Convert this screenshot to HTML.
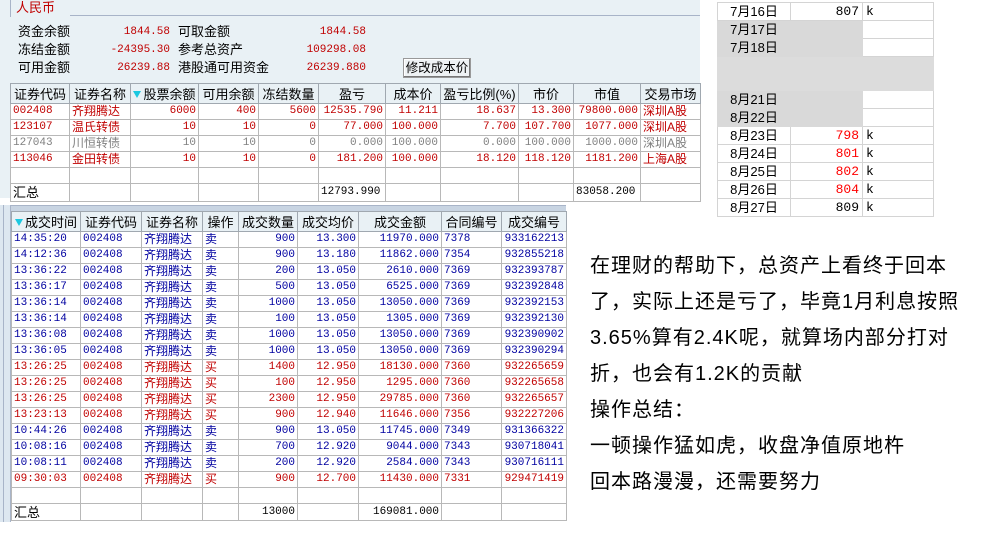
<!DOCTYPE html>
<html><head><meta charset="utf-8"><style>
*{margin:0;padding:0;box-sizing:border-box}
body{width:991px;height:555px;background:#fff;position:relative;overflow:hidden;font-family:"Liberation Sans","Noto Sans CJK SC",sans-serif;font-size:12px;color:#000}
.abs{position:absolute}
table{border-collapse:collapse;table-layout:fixed;position:absolute}
td{height:16px;line-height:15px;border:1px solid #b8b8b8;padding:0 2px;white-space:nowrap;overflow:hidden}
th{font-weight:normal;background:#e9f1f5;border:1px solid #a0a8b0;height:20px;padding:0 2px;font-size:13px;white-space:nowrap;overflow:hidden}
.r{text-align:right}.c{text-align:center}
.red td{color:#c00000}.gry td{color:#808080}.blu td{color:#0000a0}
.n{font-family:"Liberation Mono",monospace;font-size:11px}
.tri{display:inline-block;width:0;height:0;border-left:4px solid transparent;border-right:4px solid transparent;border-top:7px solid #1cc8e0;margin-right:2px;vertical-align:1px}
#right td{height:18px;border:1px solid #d4d4d4;font-size:13px;padding:0 3px;line-height:17px}
.g{background:#d9d9d9}
.txt{font-size:20px;line-height:36px;letter-spacing:1px;white-space:nowrap}
</style></head><body>
<div class="abs" style="left:0;top:0;width:700px;height:198px;background:#e9f1f5"></div>
<div class="abs" style="left:10px;top:0;width:690px;height:16px;border-bottom:1px solid #a8b4c8"></div>
<div class="abs" style="left:10px;top:0;width:60px;height:17px;background:#e9f1f5;border-left:1px solid #a8b4c8;color:#c00000;font-size:13px;padding-left:5px;line-height:15px">人民币</div>
<div class="abs" style="left:18px;top:23px;font-size:13px;line-height:18px">资金余额<br>冻结金额<br>可用金额</div>
<div class="abs n r" style="left:90px;top:23px;width:80px;color:#c00000;line-height:18px">1844.58<br>-24395.30<br>26239.88</div>
<div class="abs" style="left:178px;top:23px;font-size:13px;line-height:18px">可取金额<br>参考总资产<br>港股通可用资金</div>
<div class="abs n r" style="left:286px;top:23px;width:80px;color:#c00000;line-height:18px">1844.58<br>109298.08<br>26239.880</div>
<div class="abs" style="left:403px;top:58px;width:68px;height:20px;background:#eef2f4;border:1px solid #999;box-shadow:inset -1px -1px #777,inset 1px 1px #fff;font-size:12.5px;text-align:center;line-height:18px">修改成本价</div>
<table style="left:10px;top:83px;width:690px">
<colgroup><col style="width:59px"><col style="width:61px"><col style="width:68px"><col style="width:60px"><col style="width:60px"><col style="width:67px"><col style="width:55px"><col style="width:78px"><col style="width:55px"><col style="width:67px"><col style="width:60px"></colgroup>
<tr><th>证券代码</th><th>证券名称</th><th><span class="tri"></span>股票余额</th><th>可用余额</th><th>冻结数量</th><th>盈亏</th><th>成本价</th><th>盈亏比例(%)</th><th>市价</th><th>市值</th><th>交易市场</th></tr>
<tr class="red" style="background:#fff"><td class="n">002408</td><td>齐翔腾达</td><td class="r n">6000</td><td class="r n">400</td><td class="r n">5600</td><td class="r n">12535.790</td><td class="r n">11.211</td><td class="r n">18.637</td><td class="r n">13.300</td><td class="r n">79800.000</td><td>深圳A股</td></tr>
<tr class="red" style="background:#fff"><td class="n">123107</td><td>温氏转债</td><td class="r n">10</td><td class="r n">10</td><td class="r n">0</td><td class="r n">77.000</td><td class="r n">100.000</td><td class="r n">7.700</td><td class="r n">107.700</td><td class="r n">1077.000</td><td>深圳A股</td></tr>
<tr class="gry" style="background:#fff"><td class="n">127043</td><td>川恒转债</td><td class="r n">10</td><td class="r n">10</td><td class="r n">0</td><td class="r n">0.000</td><td class="r n">100.000</td><td class="r n">0.000</td><td class="r n">100.000</td><td class="r n">1000.000</td><td>深圳A股</td></tr>
<tr class="red" style="background:#fff"><td class="n">113046</td><td>金田转债</td><td class="r n">10</td><td class="r n">10</td><td class="r n">0</td><td class="r n">181.200</td><td class="r n">100.000</td><td class="r n">18.120</td><td class="r n">118.120</td><td class="r n">1181.200</td><td>上海A股</td></tr>
<tr style="background:#fff"><td></td><td></td><td></td><td></td><td></td><td></td><td></td><td></td><td></td><td></td><td></td></tr>
<tr style="background:#fff"><td style="height:18px;font-size:13px">汇总</td><td></td><td></td><td></td><td></td><td class="n">12793.990</td><td></td><td></td><td></td><td class="n">83058.200</td><td></td></tr>
</table>
<div class="abs" style="left:0;top:205px;width:566px;height:6px;background:#c8d4e2;border-top:1px solid #a8b4c8"></div>
<div class="abs" style="left:0;top:205px;width:11px;height:317px;background:#dde7f0;border-right:1px solid #a8b4c8"></div>
<div class="abs" style="left:3px;top:205px;width:1px;height:317px;background:#a8b4c8"></div>
<table style="left:11px;top:211px;width:555px">
<colgroup><col style="width:69px"><col style="width:61px"><col style="width:61px"><col style="width:36px"><col style="width:59px"><col style="width:61px"><col style="width:83px"><col style="width:60px"><col style="width:65px"></colgroup>
<tr><th><span class="tri"></span>成交时间</th><th>证券代码</th><th>证券名称</th><th>操作</th><th>成交数量</th><th>成交均价</th><th>成交金额</th><th>合同编号</th><th>成交编号</th></tr>
<tr class="blu"><td class="n">14:35:20</td><td class="n">002408</td><td>齐翔腾达</td><td>卖</td><td class="r n">900</td><td class="r n">13.300</td><td class="r n">11970.000</td><td class="n">7378</td><td class="r n">933162213</td></tr>
<tr class="blu"><td class="n">14:12:36</td><td class="n">002408</td><td>齐翔腾达</td><td>卖</td><td class="r n">900</td><td class="r n">13.180</td><td class="r n">11862.000</td><td class="n">7354</td><td class="r n">932855218</td></tr>
<tr class="blu"><td class="n">13:36:22</td><td class="n">002408</td><td>齐翔腾达</td><td>卖</td><td class="r n">200</td><td class="r n">13.050</td><td class="r n">2610.000</td><td class="n">7369</td><td class="r n">932393787</td></tr>
<tr class="blu"><td class="n">13:36:17</td><td class="n">002408</td><td>齐翔腾达</td><td>卖</td><td class="r n">500</td><td class="r n">13.050</td><td class="r n">6525.000</td><td class="n">7369</td><td class="r n">932392848</td></tr>
<tr class="blu"><td class="n">13:36:14</td><td class="n">002408</td><td>齐翔腾达</td><td>卖</td><td class="r n">1000</td><td class="r n">13.050</td><td class="r n">13050.000</td><td class="n">7369</td><td class="r n">932392153</td></tr>
<tr class="blu"><td class="n">13:36:14</td><td class="n">002408</td><td>齐翔腾达</td><td>卖</td><td class="r n">100</td><td class="r n">13.050</td><td class="r n">1305.000</td><td class="n">7369</td><td class="r n">932392130</td></tr>
<tr class="blu"><td class="n">13:36:08</td><td class="n">002408</td><td>齐翔腾达</td><td>卖</td><td class="r n">1000</td><td class="r n">13.050</td><td class="r n">13050.000</td><td class="n">7369</td><td class="r n">932390902</td></tr>
<tr class="blu"><td class="n">13:36:05</td><td class="n">002408</td><td>齐翔腾达</td><td>卖</td><td class="r n">1000</td><td class="r n">13.050</td><td class="r n">13050.000</td><td class="n">7369</td><td class="r n">932390294</td></tr>
<tr class="red"><td class="n">13:26:25</td><td class="n">002408</td><td>齐翔腾达</td><td>买</td><td class="r n">1400</td><td class="r n">12.950</td><td class="r n">18130.000</td><td class="n">7360</td><td class="r n">932265659</td></tr>
<tr class="red"><td class="n">13:26:25</td><td class="n">002408</td><td>齐翔腾达</td><td>买</td><td class="r n">100</td><td class="r n">12.950</td><td class="r n">1295.000</td><td class="n">7360</td><td class="r n">932265658</td></tr>
<tr class="red"><td class="n">13:26:25</td><td class="n">002408</td><td>齐翔腾达</td><td>买</td><td class="r n">2300</td><td class="r n">12.950</td><td class="r n">29785.000</td><td class="n">7360</td><td class="r n">932265657</td></tr>
<tr class="red"><td class="n">13:23:13</td><td class="n">002408</td><td>齐翔腾达</td><td>买</td><td class="r n">900</td><td class="r n">12.940</td><td class="r n">11646.000</td><td class="n">7356</td><td class="r n">932227206</td></tr>
<tr class="blu"><td class="n">10:44:26</td><td class="n">002408</td><td>齐翔腾达</td><td>卖</td><td class="r n">900</td><td class="r n">13.050</td><td class="r n">11745.000</td><td class="n">7349</td><td class="r n">931366322</td></tr>
<tr class="blu"><td class="n">10:08:16</td><td class="n">002408</td><td>齐翔腾达</td><td>卖</td><td class="r n">700</td><td class="r n">12.920</td><td class="r n">9044.000</td><td class="n">7343</td><td class="r n">930718041</td></tr>
<tr class="blu"><td class="n">10:08:11</td><td class="n">002408</td><td>齐翔腾达</td><td>卖</td><td class="r n">200</td><td class="r n">12.920</td><td class="r n">2584.000</td><td class="n">7343</td><td class="r n">930716111</td></tr>
<tr class="red"><td class="n">09:30:03</td><td class="n">002408</td><td>齐翔腾达</td><td>买</td><td class="r n">900</td><td class="r n">12.700</td><td class="r n">11430.000</td><td class="n">7331</td><td class="r n">929471419</td></tr>
<tr><td></td><td></td><td></td><td></td><td></td><td></td><td></td><td></td><td></td></tr>
<tr><td style="height:17px;font-size:13px">汇总</td><td></td><td></td><td></td><td class="r n">13000</td><td></td><td class="r n">169081.000</td><td></td><td></td></tr>
</table>
<table id="right" style="left:717px;top:2px;width:216px">
<colgroup><col style="width:73px"><col style="width:72px"><col style="width:71px"></colgroup>
<tr><td class="c">7月16日</td><td class="r n">807</td><td class="n">k</td></tr>
<tr><td class="c g" style="border-color:#d9d9d9">7月17日</td><td class="g" style="border-color:#d9d9d9"></td><td></td></tr>
<tr><td class="c g" style="border-color:#d9d9d9">7月18日</td><td class="g" style="border-color:#d9d9d9"></td><td></td></tr>
<tr><td colspan="3" style="height:34px;background:#dcdcdc;border-color:#dcdcdc"></td></tr>
<tr><td class="c g" style="border-color:#d9d9d9">8月21日</td><td class="g" style="border-color:#d9d9d9"></td><td></td></tr>
<tr><td class="c g" style="border-color:#d9d9d9">8月22日</td><td class="g" style="border-color:#d9d9d9"></td><td></td></tr>
<tr><td class="c">8月23日</td><td class="r n" style="color:#f00">798</td><td class="n">k</td></tr>
<tr><td class="c">8月24日</td><td class="r n" style="color:#f00">801</td><td class="n">k</td></tr>
<tr><td class="c">8月25日</td><td class="r n" style="color:#f00">802</td><td class="n">k</td></tr>
<tr><td class="c">8月26日</td><td class="r n" style="color:#f00">804</td><td class="n">k</td></tr>
<tr><td class="c">8月27日</td><td class="r n">809</td><td class="n">k</td></tr>
</table>
<div class="abs txt" style="left:590px;top:248px">在理财的帮助下，总资产上看终于回本<br>了，实际上还是亏了，毕竟1月利息按照<br>3.65%算有2.4K呢，就算场内部分打对<br>折，也会有1.2K的贡献<br>操作总结：<br>一顿操作猛如虎，收盘净值原地杵<br>回本路漫漫，还需要努力</div>
</body></html>
